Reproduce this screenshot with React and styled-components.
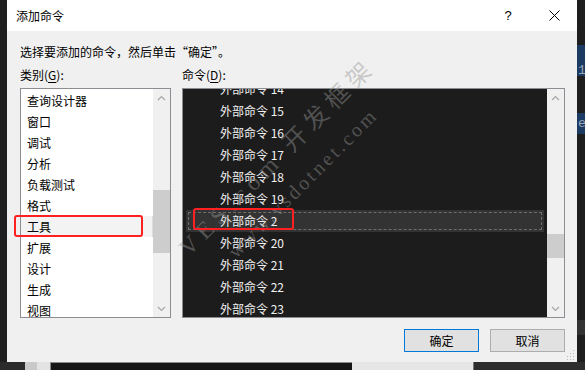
import React from "react";
import styled, { createGlobalStyle } from "styled-components";

const Global = createGlobalStyle`
  body {
    margin: 0;
    background: #1e1e1e;
    font-family: "Noto Sans CJK SC", "Liberation Sans", sans-serif;
    font-size: 12px;
    color: #000;
  }
  * { box-sizing: border-box; }
`;

const Screen = styled.div`
  position: relative;
  width: 585px;
  height: 370px;
  overflow: hidden;
  display: grid;
  grid-template-columns: 7px 570px 8px;
  grid-template-rows: 362px 8px;
  background: #1e1e1e;
`;

const LeftEdge = styled.div`
  background: #1f1f1f;
`;

const RightEdge = styled.div`
  display: flex;
  flex-direction: column;
  background: #1e1e1e;
  overflow: hidden;
`;

const Band = styled.div`
  height: ${(p) => p.$h}px;
  background: ${(p) => p.$bg || "transparent"};
  color: #9aa7b8;
  font-family: "Liberation Mono", monospace;
  font-size: 13px;
  line-height: ${(p) => p.$h}px;
  white-space: nowrap;
  padding-left: 1px;
`;

const BottomBar = styled.div`
  grid-column: 1 / -1;
  display: flex;
`;

const Seg = styled.div`
  width: ${(p) => (p.$w ? `${p.$w}px` : "auto")};
  flex: ${(p) => (p.$w ? "none" : 1)};
  background: ${(p) => p.$bg};
  border-left: ${(p) => (p.$line ? `1px solid ${p.$line}` : "none")};
  border-top: ${(p) => (p.$top ? `1px solid ${p.$top}` : "none")};
`;

const Dialog = styled.div`
  position: relative;
  display: flex;
  flex-direction: column;
  background: #f0f0f0;
`;

const TitleBar = styled.div`
  height: 31px;
  display: flex;
  align-items: center;
  background: #fff;
  padding-left: 9px;
`;

const Title = styled.div`
  flex: 1;
  line-height: 16px;
`;

const TitleButton = styled.div`
  width: 46px;
  height: 31px;
  display: flex;
  align-items: center;
  justify-content: center;
  font-family: "Liberation Sans", sans-serif;
  font-size: 13px;
`;

const Body = styled.div`
  flex: 1;
  display: flex;
  flex-direction: column;
  padding: 12px 12px 0 13px;
`;

const Prompt = styled.div`
  line-height: 18px;
  height: 18px;
`;

const Lists = styled.div`
  display: grid;
  grid-template-columns: 151px 383px;
  grid-template-rows: 18px 230px;
  column-gap: 11px;
  row-gap: 4px;
  margin-top: 5px;
`;

const Label = styled.div`
  line-height: 18px;
  u { text-underline-offset: 2px; }
`;

const ListBox = styled.div`
  display: flex;
  border: 1px solid #8c8d92;
  background: #fff;
  overflow: hidden;
`;

const Viewport = styled.div`
  flex: 1;
  overflow: hidden;
  padding-top: ${(p) => (p.$dark ? 0 : 1)}px;
  background: ${(p) => (p.$dark ? "#1c1c1c" : "#fff")};
`;

const Item = styled.div`
  height: 21px;
  line-height: 21px;
  padding-left: 6px;
  white-space: nowrap;
  background: ${(p) => (p.$selected ? "#f3f3f3" : "transparent")};
  border-right: 1px solid ${(p) => (p.$selected ? "#dcdcdc" : "transparent")};
`;

const DarkList = styled.div`
  margin-top: -11px;
`;

const DarkItem = styled.div`
  position: relative;
  height: 22px;
  line-height: 22px;
  margin: 0 3px;
  padding-left: 34px;
  color: #f1f1f1;
  font-size: 12px;
  white-space: nowrap;
  background: ${(p) => (p.$selected ? "#333333" : "transparent")};
  &::after {
    content: "";
    display: ${(p) => (p.$selected ? "block" : "none")};
    position: absolute;
    inset: 2px;
    border: 1px dashed #6e6e6e;
  }
`;

const ScrollBar = styled.div`
  width: 17px;
  display: flex;
  flex-direction: column;
  background: #f0f0f0;
`;

const Arrow = styled.div`
  height: 17px;
  display: flex;
  align-items: center;
  justify-content: center;
`;

const Track = styled.div`
  flex: 1;
`;

const Thumb = styled.div`
  margin-top: ${(p) => p.$top}px;
  height: ${(p) => p.$h}px;
  background: #cdcdcd;
`;

const Footer = styled.div`
  display: flex;
  justify-content: flex-end;
  gap: 11px;
  margin-top: 11px;
`;

const Button = styled.div`
  width: 75px;
  height: 23px;
  display: flex;
  align-items: center;
  justify-content: center;
  background: #e1e1e1;
  border: 1px solid ${(p) => (p.$primary ? "#0078d7" : "#adadad")};
`;

const Grip = styled.svg`
  position: absolute;
  right: 2px;
  bottom: 2px;
`;

const Mark = styled.div`
  position: absolute;
  left: ${(p) => p.$x}px;
  top: ${(p) => p.$y}px;
  width: ${(p) => p.$w}px;
  height: ${(p) => p.$h}px;
  border: 2px solid #ff2121;
  border-radius: 3px;
  pointer-events: none;
`;

const Watermark = styled.div`
  position: absolute;
  left: 290px;
  top: 170px;
  width: 360px;
  transform: translate(-50%, -50%) rotate(-45deg);
  text-align: center;
  color: rgba(150, 150, 150, 0.45);
  font-family: "Liberation Serif", "Noto Sans CJK SC", serif;
  pointer-events: none;
  white-space: nowrap;
`;

const WmLine = styled.div`
  font-size: ${(p) => p.$size}px;
  line-height: 36px;
  letter-spacing: ${(p) => p.$spacing}px;
`;

const Chevron = ({ down }) => (
  <svg width="9" height="6" viewBox="0 0 9 6">
    <polyline
      points={down ? "1,1 4.5,4.5 8,1" : "1,5 4.5,1.5 8,5"}
      fill="none"
      stroke="#a6a6a6"
      strokeWidth="1.2"
    />
  </svg>
);

const categories = [
  "查询设计器",
  "窗口",
  "调试",
  "分析",
  "负载测试",
  "格式",
  "工具",
  "扩展",
  "设计",
  "生成",
  "视图",
];

const commands = ["14", "15", "16", "17", "18", "19", "2", "20", "21", "22", "23"];

export default function App() {
  return (
    <>
      <Global />
      <Screen>
        <LeftEdge />
        <Dialog>
          <TitleBar>
            <Title>添加命令</Title>
            <TitleButton>?</TitleButton>
            <TitleButton>
              <svg width="11" height="11" viewBox="0 0 11 11">
                <path d="M0.5 0.5 L10.5 10.5 M10.5 0.5 L0.5 10.5" stroke="#000" strokeWidth="1" />
              </svg>
            </TitleButton>
          </TitleBar>
          <Body>
            <Prompt>选择要添加的命令，然后单击“确定”。</Prompt>
            <Lists>
              <Label>
                类别(<u>G</u>):
              </Label>
              <Label>
                命令(<u>D</u>):
              </Label>
              <ListBox>
                <Viewport>
                  {categories.map((c) => (
                    <Item key={c} $selected={c === "工具"}>
                      {c}
                    </Item>
                  ))}
                </Viewport>
                <ScrollBar>
                  <Arrow>
                    <Chevron />
                  </Arrow>
                  <Track>
                    <Thumb $top={84} $h={63} />
                  </Track>
                  <Arrow>
                    <Chevron down />
                  </Arrow>
                </ScrollBar>
              </ListBox>
              <ListBox>
                <Viewport $dark>
                  <DarkList>
                    {commands.map((n) => (
                      <DarkItem key={n} $selected={n === "2"}>
                        外部命令 {n}
                      </DarkItem>
                    ))}
                  </DarkList>
                </Viewport>
                <ScrollBar>
                  <Arrow>
                    <Chevron />
                  </Arrow>
                  <Track>
                    <Thumb $top={128} $h={24} />
                  </Track>
                  <Arrow>
                    <Chevron down />
                  </Arrow>
                </ScrollBar>
              </ListBox>
            </Lists>
            <Footer>
              <Button $primary>确定</Button>
              <Button>取消</Button>
            </Footer>
          </Body>
          <Grip width="10" height="10" viewBox="0 0 10 10">
            {[
              [8, 0], [8, 3], [5, 3], [8, 6], [5, 6], [2, 6], [8, 9], [5, 9], [2, 9], [-1, 9],
            ].map(([x, y]) => (
              <rect key={`${x}-${y}`} x={x} y={y} width="1" height="1" fill="#b8b8b8" />
            ))}
          </Grip>
        </Dialog>
        <RightEdge>
          <Band $h={45} />
          <Band $h={21} $bg="#1b3b63" />
          <Band $h={10} $bg="#1b3b63">1</Band>
          <Band $h={37} />
          <Band $h={21} $bg="#1b3b63">e</Band>
          <Band $h={186} />
          <Band $h={15} $bg="#333" />
        </RightEdge>
        <BottomBar>
          <Seg $w={25} $bg="#2b2b2b" />
          <Seg $w={12} $bg="#c9c9c9" />
          <Seg $w={13} $bg="#e3e3e3" />
          <Seg $w={302} $bg="#151515" $line="#8a8a8a" $top="#8a8a8a" />
          <Seg $w={121} $bg="#e6e6e6" />
          <Seg $bg="#2d2d2d" $line="#777" />
        </BottomBar>
        <Watermark>
          <WmLine $size={24} $spacing={6}>VES.com 开发框架</WmLine>
          <WmLine $size={20} $spacing={3}>www.vsdotnet.com</WmLine>
        </Watermark>
        <Mark $x={14} $y={215} $w={129} $h={22} />
        <Mark $x={193} $y={208} $w={101} $h={22} />
      </Screen>
    </>
  );
}
